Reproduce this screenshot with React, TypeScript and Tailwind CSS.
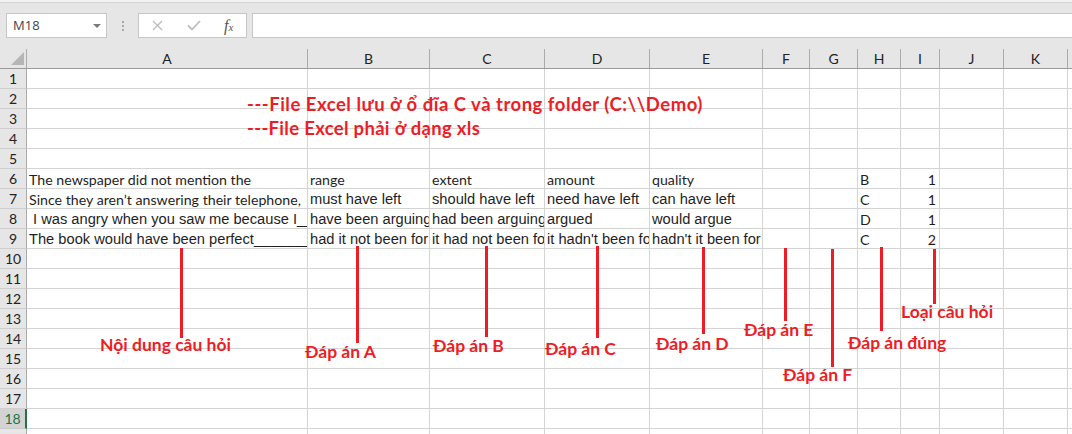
import type { ReactNode } from 'react'

type Cell = { t: string; f: 'c' | 'a'; right?: boolean }

const COLS = [
  { k: 'A', w: 'w-[281px]' },
  { k: 'B', w: 'w-[122px]' },
  { k: 'C', w: 'w-[115px]' },
  { k: 'D', w: 'w-[105px]' },
  { k: 'E', w: 'w-[113px]' },
  { k: 'F', w: 'w-[47px]' },
  { k: 'G', w: 'w-[48px]' },
  { k: 'H', w: 'w-[43px]' },
  { k: 'I', w: 'w-[39px]' },
  { k: 'J', w: 'w-[64px]' },
  { k: 'K', w: 'w-[64px]' },
  { k: 'L', w: 'w-[64px]' },
]

const DATA: Record<number, Record<string, Cell>> = {
  6: {
    A: { t: 'The newspaper did not mention the', f: 'c' },
    B: { t: 'range', f: 'c' },
    C: { t: 'extent', f: 'c' },
    D: { t: 'amount', f: 'c' },
    E: { t: 'quality', f: 'c' },
    H: { t: 'B', f: 'c' },
    I: { t: '1', f: 'c', right: true },
  },
  7: {
    A: { t: 'Since they aren’t answering their telephone,     they must have gone out', f: 'c' },
    B: { t: 'must have left', f: 'a' },
    C: { t: 'should have left', f: 'a' },
    D: { t: 'need have left', f: 'a' },
    E: { t: 'can have left', f: 'a' },
    H: { t: 'C', f: 'c' },
    I: { t: '1', f: 'c', right: true },
  },
  8: {
    A: { t: ' I was angry when you saw me because I__________ with my mother', f: 'a' },
    B: { t: 'have been arguing', f: 'a' },
    C: { t: 'had been arguing', f: 'a' },
    D: { t: 'argued', f: 'a' },
    E: { t: 'would argue', f: 'a' },
    H: { t: 'D', f: 'c' },
    I: { t: '1', f: 'c', right: true },
  },
  9: {
    A: { t: 'The book would have been perfect__________ the ending', f: 'a' },
    B: { t: 'had it not been for', f: 'a' },
    C: { t: 'it had not been for', f: 'a' },
    D: { t: "it hadn't been for", f: 'a' },
    E: { t: "hadn't it been for", f: 'a' },
    H: { t: 'C', f: 'c' },
    I: { t: '2', f: 'c', right: true },
  },
}

const ROWS = Array.from({ length: 19 }, (_, i) => i + 1)

function Toolbar() {
  return (
    <div className="h-[49px] bg-[#e6e6e6]">
      <div className="h-[3px] bg-[#f1f1f1] border-b border-[#d4d4d4]" />
      <div className="mt-[10px] flex h-[25px] items-stretch">
        {/* name box */}
        <div className="ml-[6px] flex w-[101px] items-center border border-[#c6c6c6] bg-white pl-[6px]">
          <span className="font-['Open_Sans',sans-serif] text-[13px] text-[#444]">M18</span>
          <span className="ml-auto mr-[5px] h-0 w-0 border-x-[4px] border-t-[4px] border-x-transparent border-t-[#7a7a7a]" />
        </div>
        {/* grip dots */}
        <div className="ml-[15px] flex w-[2px] flex-col items-center justify-center gap-[2px]">
          <span className="h-[2px] w-[2px] bg-[#a8a8a8]" />
          <span className="h-[2px] w-[2px] bg-[#a8a8a8]" />
          <span className="h-[2px] w-[2px] bg-[#a8a8a8]" />
        </div>
        {/* cancel / enter / fx */}
        <div className="ml-[14px] flex w-[109px] items-center border border-[#c6c6c6] bg-white">
          <svg className="ml-[13px]" width="11" height="11" viewBox="0 0 11 11">
            <path d="M1 1 L10 10 M10 1 L1 10" stroke="#bdbdbd" strokeWidth="1.4" fill="none" />
          </svg>
          <svg className="ml-[24px]" width="14" height="11" viewBox="0 0 14 11">
            <path d="M1 5.5 L5 9.5 L13 1" stroke="#bdbdbd" strokeWidth="1.8" fill="none" />
          </svg>
          <span className="ml-[23px] font-['Liberation_Serif',serif] text-[16px] italic leading-none text-[#555]">
            f<span className="text-[11px]">x</span>
          </span>
        </div>
        {/* formula input */}
        <div className="ml-[5px] flex-1 border-y border-l border-[#c6c6c6] bg-white" />
      </div>
    </div>
  )
}

function ColumnHeaders() {
  return (
    <div className="flex h-[20px] border-b border-[#9b9b9b] bg-[#e6e6e6]">
      <div className="relative w-[27px] shrink-0 border-r border-[#ababab]">
        <svg className="absolute left-[11px] top-[3px]" width="13" height="13" viewBox="0 0 13 13">
          <path d="M13 0 L13 13 L0 13 Z" fill="#b5b5b5" />
        </svg>
      </div>
      {COLS.map((c) => (
        <div
          key={c.k}
          className={`${c.w} shrink-0 border-r border-[#ababab] text-center text-[14px] leading-[19px] text-[#222]`}
        >
          {c.k}
        </div>
      ))}
    </div>
  )
}

function CellBox({ cell }: { cell?: Cell }) {
  if (!cell) return null
  const font =
    cell.f === 'a'
      ? "font-['Liberation_Sans',Arial,sans-serif] text-[14.67px]"
      : "font-['Lato',sans-serif] text-[14.2px]"
  return (
    <span
      className={`${font} block w-full overflow-hidden whitespace-pre leading-[17px] text-[#1e1e1e] ${
        cell.right ? 'pr-[3px] text-right' : 'pl-[2px]'
      }`}
    >
      {cell.t}
    </span>
  )
}

function Row({ n }: { n: number }) {
  const selected = n === 18
  return (
    <div className="flex h-[20px]">
      <div
        className={`flex w-[27px] shrink-0 items-center justify-center border-b text-[14px] leading-[19px] ${
          selected
            ? 'border-b-[#c6c6c6] border-r-2 border-r-[#217346] bg-[#d3d3d3] text-[#217346]'
            : 'border-b-[#cfcfcf] border-r border-r-[#ababab] bg-[#e6e6e6] text-[#222]'
        }`}
      >
        {n}
      </div>
      {COLS.map((c) => (
        <div
          key={c.k}
          className={`${c.w} flex shrink-0 items-end overflow-hidden border-b border-r border-[#d4d4d4] bg-white`}
        >
          <CellBox cell={DATA[n]?.[c.k]} />
        </div>
      ))}
    </div>
  )
}

function Note({ className, children }: { className: string; children: ReactNode }) {
  return (
    <span
      className={`absolute whitespace-nowrap font-['Lato',sans-serif] font-bold text-[#ee1d25] ${className}`}
    >
      {children}
    </span>
  )
}

function Pointer({ className }: { className: string }) {
  return <span className={`absolute w-[3px] bg-[#ee1d25] ${className}`} />
}

const LABEL = 'text-[17.5px] leading-[20px]'

export default function App() {
  return (
    <div className="relative h-[434px] w-[1072px] overflow-hidden bg-white font-['Lato',sans-serif]">
      <Toolbar />
      <ColumnHeaders />
      <div>
        {ROWS.map((n) => (
          <Row key={n} n={n} />
        ))}
      </div>

      {/* annotations drawn over the sheet */}
      <Note className="left-[247px] top-[93px] text-[18.5px] leading-[22px] tracking-[0.5px]">
        ---File Excel lưu ở ổ đĩa C và trong folder (C:\\Demo)
      </Note>
      <Note className="left-[247px] top-[117px] text-[18.5px] leading-[22px] tracking-[0.3px]">
        ---File Excel phải ở dạng xls
      </Note>

      <Pointer className="left-[180px] top-[248px] h-[90px]" />
      <Pointer className="left-[356px] top-[246px] h-[97px]" />
      <Pointer className="left-[485px] top-[246px] h-[91px]" />
      <Pointer className="left-[596px] top-[246px] h-[92px]" />
      <Pointer className="left-[702px] top-[247px] h-[87px]" />
      <Pointer className="left-[784px] top-[248px] h-[73px]" />
      <Pointer className="left-[831px] top-[249px] h-[118px]" />
      <Pointer className="left-[880px] top-[247px] h-[84px]" />
      <Pointer className="left-[933px] top-[249px] h-[55px]" />

      <Note className={`left-[100px] top-[335px] ${LABEL}`}>Nội dung câu hỏi</Note>
      <Note className={`left-[305px] top-[342px] ${LABEL}`}>Đáp án A</Note>
      <Note className={`left-[433px] top-[336px] ${LABEL}`}>Đáp án B</Note>
      <Note className={`left-[545px] top-[339px] ${LABEL}`}>Đáp án C</Note>
      <Note className={`left-[656px] top-[334px] ${LABEL}`}>Đáp án D</Note>
      <Note className={`left-[744px] top-[320px] ${LABEL}`}>Đáp án E</Note>
      <Note className={`left-[783px] top-[365px] ${LABEL}`}>Đáp án F</Note>
      <Note className={`left-[848px] top-[333px] ${LABEL}`}>Đáp án đúng</Note>
      <Note className={`left-[901px] top-[302px] ${LABEL}`}>Loại câu hỏi</Note>
    </div>
  )
}
